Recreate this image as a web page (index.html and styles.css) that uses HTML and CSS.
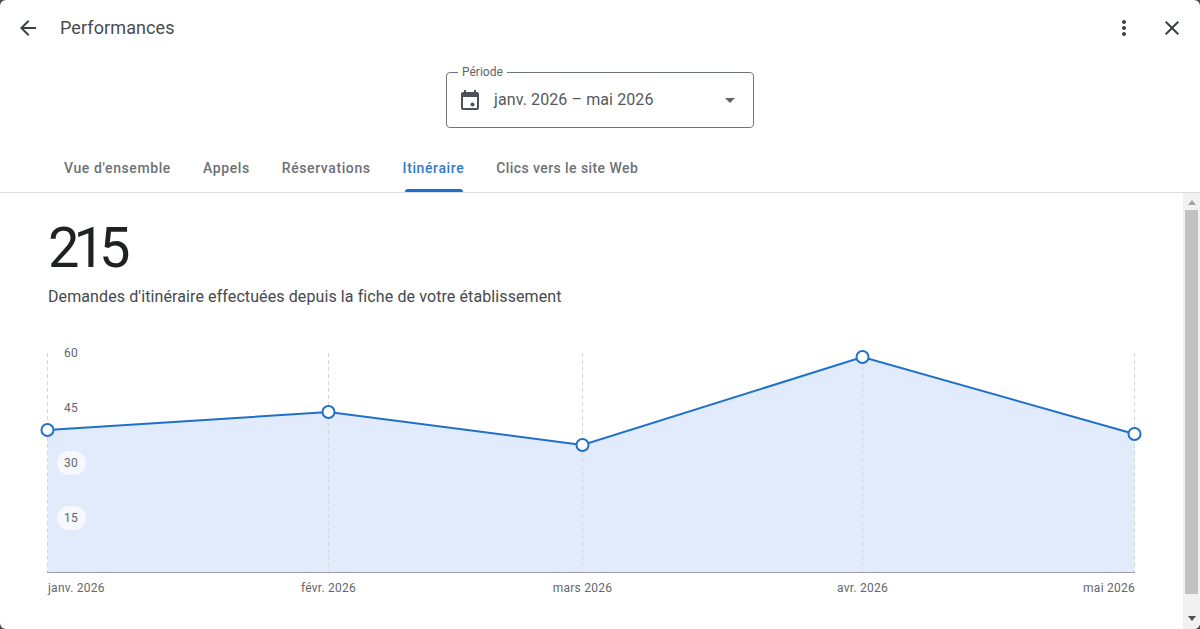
FILE: index.html
```html
<!DOCTYPE html>
<html lang="fr">
<head>
<meta charset="utf-8">
<title>Performances</title>
<link rel="stylesheet" href="styles.css">
</head>
<body>
<div class="dialog">
  <header class="topbar">
    <button class="icon-btn" aria-label="Retour">
      <svg viewBox="0 0 24 24" class="icon"><path d="M20 11H7.83l5.59-5.59L12 4l-8 8 8 8 1.41-1.41L7.83 13H20v-2z"/></svg>
    </button>
    <h1 class="title">Performances</h1>
    <div class="spacer"></div>
    <button class="icon-btn" aria-label="Plus">
      <svg viewBox="0 0 24 24" class="icon"><path d="M12 8c1.1 0 2-.9 2-2s-.9-2-2-2-2 .9-2 2 .9 2 2 2zm0 2c-1.1 0-2 .9-2 2s.9 2 2 2 2-.9 2-2-.9-2-2-2zm0 6c-1.1 0-2 .9-2 2s.9 2 2 2 2-.9 2-2-.9-2-2-2z"/></svg>
    </button>
    <button class="icon-btn" aria-label="Fermer">
      <svg viewBox="0 0 24 24" class="icon"><path d="M19 6.41 17.59 5 12 10.59 6.41 5 5 6.41 10.59 12 5 17.59 6.41 19 12 13.41 17.59 19 19 17.59 13.41 12z"/></svg>
    </button>
  </header>

  <div class="period-row">
    <div class="period">
      <span class="period-label">Période</span>
      <svg viewBox="0 0 24 24" class="cal"><path fill-rule="evenodd" d="M19 4h-1V2h-2v2H8V2H6v2H5c-1.1 0-2 .9-2 2v14c0 1.1.9 2 2 2h14c1.1 0 2-.9 2-2V6c0-1.1-.9-2-2-2zm0 16H5V9h14v11z"/><circle cx="14.5" cy="16.5" r="2"/></svg>
      <span class="period-value">janv. 2026 – mai 2026</span>
      <span class="caret"></span>
    </div>
  </div>

  <nav class="tabs">
    <a class="tab">Vue d'ensemble</a>
    <a class="tab">Appels</a>
    <a class="tab">Réservations</a>
    <a class="tab active">Itinéraire</a>
    <a class="tab">Clics vers le site Web</a>
  </nav>

  <main class="content">
    <div class="panel">
      <div class="big">215</div>
      <p class="desc">Demandes d'itinéraire effectuées depuis la fiche de votre établissement</p>
      <svg class="chart" viewBox="0 0 1183 290" width="1183" height="290">
        <g transform="translate(0 -334)">
          <path class="area" d="M47.5 430 328.5 412 582.5 445 862.5 357 1134.5 434V572.5H47.5Z"/>
          <g class="grid">
            <path d="M47.5 353V572"/><path d="M328.5 353V572"/><path d="M582.5 353V572"/><path d="M862.5 353V572"/><path d="M1134.5 353V572"/>
          </g>
          <path class="base" d="M47 572.5H1135"/>
          <rect class="pill" x="57" y="451" width="29" height="24" rx="12"/>
          <rect class="pill" x="57" y="506" width="29" height="24" rx="12"/>
          <g class="ylab">
            <text x="71" y="357">60</text><text x="71" y="412">45</text><text x="71" y="467">30</text><text x="71" y="522">15</text>
          </g>
          <path class="line" d="M47.5 430 328.5 412 582.5 445 862.5 357 1134.5 434"/>
          <g class="dot">
            <circle cx="47.5" cy="430" r="6"/><circle cx="328.5" cy="412" r="6"/><circle cx="582.5" cy="445" r="6"/><circle cx="862.5" cy="357" r="6"/><circle cx="1134.5" cy="434" r="6"/>
          </g>
          <g class="xlab">
            <text x="48" y="592">janv. 2026</text>
            <text x="328.5" y="592" class="mid">févr. 2026</text>
            <text x="582.5" y="592" class="mid">mars 2026</text>
            <text x="862.5" y="592" class="mid">avr. 2026</text>
            <text x="1135" y="592" class="end">mai 2026</text>
          </g>
        </g>
      </svg>
    </div>
    <div class="scrollbar">
      <span class="arrow up"></span>
      <span class="thumb"></span>
      <span class="arrow down"></span>
    </div>
  </main>
</div>
</body>
</html>
```

FILE: styles.css
```css
* { box-sizing: border-box; }
html, body { margin: 0; height: 100%; }
body {
  background: #4a4a4a;
  font-family: Roboto, "Liberation Sans", sans-serif;
  color: #202124;
  overflow: hidden;
}
.dialog {
  width: 1200px;
  height: 629px;
  background: #fff;
  border-radius: 6px;
  overflow: hidden;
  display: flex;
  flex-direction: column;
}
.topbar {
  height: 56px;
  display: flex;
  align-items: center;
  padding: 0 4px;
  flex: none;
}
.icon-btn {
  width: 48px;
  height: 48px;
  border: 0;
  background: none;
  padding: 0;
  display: flex;
  align-items: center;
  justify-content: center;
}
.icon { width: 24px; height: 24px; fill: #3c4043; }
.title {
  margin: 0 0 2px 8px;
  font-size: 18px;
  font-weight: 400;
  letter-spacing: 0.1px;
  color: #484c50;
}
.spacer { flex: 1; }
.period-row {
  display: flex;
  justify-content: center;
  padding-top: 16px;
  flex: none;
}
.period {
  position: relative;
  width: 308px;
  height: 56px;
  border: 1px solid #70757a;
  border-radius: 4px;
  display: flex;
  align-items: center;
  padding: 0 11px;
}
.period-label {
  position: absolute;
  top: -8px;
  left: 11px;
  padding: 0 4px;
  background: #fff;
  font-size: 12px;
  line-height: 15px;
  color: #5f6368;
}
.cal { width: 24px; height: 24px; fill: #4d5156; flex: none; }
.period-value {
  margin: 0 0 2px 12px;
  font-size: 16px;
  letter-spacing: 0.1px;
  color: #55595e;
}
.caret {
  margin-left: auto;
  margin-right: 7px;
  width: 0;
  height: 0;
  border-left: 5px solid transparent;
  border-right: 5px solid transparent;
  border-top: 5px solid #5f6368;
}
.tabs {
  height: 65px;
  padding-left: 48px;
  display: flex;
  align-items: stretch;
  border-bottom: 1px solid #dadce0;
  flex: none;
}
.tab {
  position: relative;
  padding: 24px 16px 0;
  font-size: 14px;
  font-weight: 500;
  line-height: 32px;
  letter-spacing: 0.6px;
  color: #6d7176;
  white-space: nowrap;
}
.tab:last-child { letter-spacing: 0.42px; }
.tab.active { color: #2f7bcb; }
.tab.active::after {
  content: "";
  position: absolute;
  left: 18px;
  right: 17px;
  bottom: 0;
  height: 3px;
  border-radius: 3px 3px 0 0;
  background: #1a6fc9;
}
.content {
  position: relative;
  flex: 1;
  display: flex;
  min-height: 0;
}
.panel { flex: 1; min-width: 0; }
.big {
  margin: 27px 0 0 48px;
  font-size: 56px;
  line-height: 56px;
  font-weight: 400;
  letter-spacing: -6px;
  color: #202124;
}
.desc {
  margin: 11px 0 0 48px;
  font-size: 16px;
  line-height: 20px;
  letter-spacing: 0.1px;
  color: #45494d;
}
.chart { display: block; margin-top: 27px; overflow: visible; }
.area { fill: #e1ebfc; }
.grid path { stroke: #d3d7dc; stroke-width: 1; stroke-dasharray: 4 3; fill: none; }
.base { stroke: #9aa0a6; stroke-width: 1; fill: none; }
.pill { fill: #f6f8fc; }
.line { fill: none; stroke: #1f70c8; stroke-width: 2; }
.dot circle { fill: #fff; stroke: #1f70c8; stroke-width: 2; }
.ylab text { font-size: 12px; letter-spacing: 0.3px; fill: #63676c; text-anchor: middle; }
.xlab text { font-size: 12px; letter-spacing: 0.25px; fill: #63676c; }
.xlab .mid { text-anchor: middle; }
.xlab .end { text-anchor: end; }
.scrollbar {
  width: 17px;
  background: #f1f1f1;
  display: flex;
  flex-direction: column;
  align-items: center;
  flex: none;
}
.arrow { width: 0; height: 0; border-left: 4px solid transparent; border-right: 4px solid transparent; flex: none; }
.arrow.up { margin: 7px 0 5px; border-bottom: 5px solid #a3a3a3; }
.arrow.down { margin: 22px 0 0; border-top: 5px solid #505050; }
.thumb { width: 13px; height: 384px; background: #c1c1c1; flex: none; }
```
